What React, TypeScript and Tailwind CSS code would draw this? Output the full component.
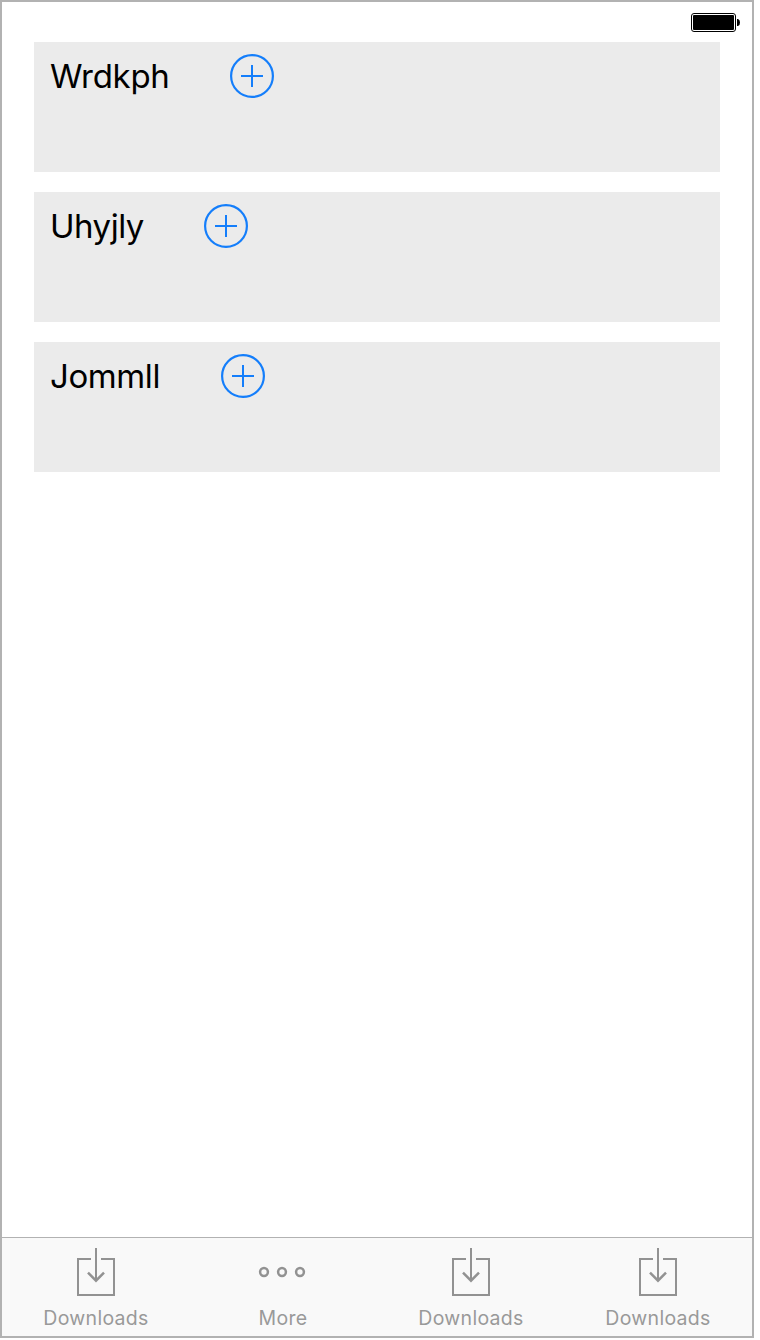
const rows = [
  { title: "Wrdkph", label: "w-[180px] tracking-[-0.3px]" },
  { title: "Uhyjly", label: "w-[154px] tracking-[-0.5px]" },
  { title: "Jommll", label: "w-[171px] tracking-[-0.4px]" },
];

const tabs = [
  { name: "Downloads", icon: "download", cell: "w-[188px]" },
  { name: "More", icon: "more", cell: "w-[186px]" },
  { name: "Downloads", icon: "download", cell: "w-[190px]" },
  { name: "Downloads", icon: "download", cell: "w-[184px]" },
];

function AddButton() {
  return (
    <button type="button" aria-label="Add" className="mt-3 size-11">
      <svg width="44" height="44" viewBox="0 0 44 44" fill="none" stroke="#147efb" strokeWidth="2">
        <circle cx="22" cy="22" r="20.9" strokeWidth="2.2" />
        <path d="M11 22H33M22 11V33" />
      </svg>
    </button>
  );
}

function Battery() {
  return (
    <svg width="50" height="20" viewBox="0 0 50 20">
      <rect x="0.5" y="0.5" width="44" height="18" rx="2.5" fill="none" stroke="#000" />
      <rect x="2" y="2" width="41" height="15" rx="1" />
      <path d="M46 6H47Q49 6.5 49 9.5T47 13H46Z" />
    </svg>
  );
}

function TabIcon({ name }: { name: string }) {
  return (
    <svg width="50" height="50" viewBox="0 0 50 50" fill="none" stroke="#929292" strokeWidth="2">
      {name === "download" ? (
        <>
          <path d="M20 12H7V48H43V12H30" />
          <path d="M25 1V34" />
          <path d="M17 25.7L25 33.7L33 25.7" strokeWidth="2.5" />
        </>
      ) : (
        <g strokeWidth="2.5">
          <circle cx="6" cy="25" r="3.9" />
          <circle cx="24" cy="25" r="3.9" />
          <circle cx="42" cy="25" r="3.9" />
        </g>
      )}
    </svg>
  );
}

export default function App() {
  return (
    <div className="h-[1340px] w-[760px] bg-white font-['Inter',sans-serif]">
      <div className="flex h-[1338px] w-[754px] flex-col border-2 border-[#b2b2b2] bg-white">
        <header className="flex h-10 shrink-0 justify-end pt-[11px] pr-[11px]">
          <Battery />
        </header>
        <main className="flex flex-1 flex-col gap-5 pr-8 pl-8">
          {rows.map((row) => (
            <section key={row.title} className="flex h-[130px] items-start bg-[#ebebeb] pl-4">
              <span className={`mt-[14px] text-[33px] leading-[41px] text-black ${row.label}`}>{row.title}</span>
              <AddButton />
            </section>
          ))}
        </main>
        <nav className="flex h-[99px] shrink-0 border-t border-[#b2b2b2] bg-[#f9f9f9]">
          {tabs.map((tab, i) => (
            <div key={i} className={`flex shrink-0 flex-col items-center pt-[9px] ${tab.cell}`}>
              <TabIcon name={tab.icon} />
              <span className="mt-[9px] text-[19.5px] leading-6 tracking-[0.3px] text-[#999999]">{tab.name}</span>
            </div>
          ))}
        </nav>
      </div>
    </div>
  );
}
